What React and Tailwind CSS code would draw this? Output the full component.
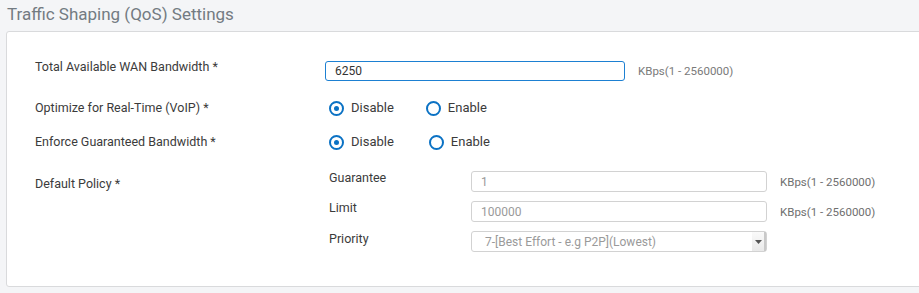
import React, { useState } from "react";

const font = { fontFamily: "Roboto, 'Noto Sans', sans-serif" };

const Radio = ({ checked, label, onClick, className = "" }) => (
  <button
    type="button"
    onClick={onClick}
    className={`flex items-center gap-[7px] text-[13px] text-[#3b3b3b] ${className}`}
  >
    <span className="w-[15px] h-[15px] rounded-full border-2 border-[#0b72c4] flex items-center justify-center bg-white">
      {checked ? <span className="w-[5px] h-[5px] rounded-full bg-[#0b72c4]" /> : null}
    </span>
    {label}
  </button>
);

const App = () => {
  const [voip, setVoip] = useState("disable");
  const [enforce, setEnforce] = useState("disable");

  return (
    <div className="w-[919px] h-[293px] bg-[#f4f5f7] overflow-hidden" style={font}>
      {/* TITLE */}
      <div className="h-[31px] pl-[7px] pt-[3px] text-[17px] leading-[23px] text-[#737b82]">
        Traffic Shaping (QoS) Settings
      </div>

      <div className="ml-[6px] w-[930px] h-[256px] bg-white border border-[#d9dadc] rounded-[3px] pt-[27px] pl-[28px]">
        {/* WAN BANDWIDTH */}
        <div className="flex items-start h-[22px]">
          <div className="w-[290px] text-[12.5px] leading-[16px] text-[#3b3b3b]">
            Total Available WAN Bandwidth *
          </div>
          <input
            defaultValue="6250"
            className="mt-[2px] w-[300px] h-[20px] px-[9px] border border-[#1d80d2] rounded-[3px] text-[12px] text-[#333] outline-none"
          />
          <span className="ml-[13px] mt-[5px] text-[11.5px] leading-[14px] text-[#7a7a7a]">
            KBps(1 - 2560000)
          </span>
        </div>

        {/* VOIP */}
        <div className="flex items-center h-[16px] mt-[19px]">
          <div className="w-[294px] text-[12.5px] text-[#3b3b3b]">
            Optimize for Real-Time (VoIP) *
          </div>
          <Radio checked={voip === "disable"} label="Disable" onClick={() => setVoip("disable")} />
          <Radio checked={voip === "enable"} label="Enable" onClick={() => setVoip("enable")} className="ml-[32px]" />
        </div>

        {/* ENFORCE */}
        <div className="flex items-center h-[16px] mt-[18px]">
          <div className="w-[294px] text-[12.5px] text-[#3b3b3b]">
            Enforce Guaranteed Bandwidth *
          </div>
          <Radio checked={enforce === "disable"} label="Disable" onClick={() => setEnforce("disable")} />
          <Radio checked={enforce === "enable"} label="Enable" onClick={() => setEnforce("enable")} className="ml-[35px]" />
        </div>

        {/* DEFAULT POLICY */}
        <div className="flex items-start mt-[21px]">
          <div className="w-[294px] pt-[5px] text-[12.5px] leading-[16px] text-[#3b3b3b]">
            Default Policy *
          </div>
          <div className="flex flex-col gap-[9px]">
            <div className="flex items-start h-[21px]">
              <div className="w-[142px] text-[12.5px] leading-[14px] text-[#3b3b3b]">Guarantee</div>
              <input
                disabled
                defaultValue="1"
                className="w-[296px] h-[21px] px-[9px] border border-[#d2d2d2] rounded-[3px] bg-white text-[12px] text-[#9a9a9a]"
              />
              <span className="ml-[13px] mt-[4px] text-[11.5px] leading-[14px] text-[#6f6f6f]">
                KBps(1 - 2560000)
              </span>
            </div>
            <div className="flex items-start h-[21px]">
              <div className="w-[142px] text-[12.5px] leading-[14px] text-[#3b3b3b]">Limit</div>
              <input
                disabled
                defaultValue="100000"
                className="w-[296px] h-[21px] px-[9px] border border-[#d2d2d2] rounded-[3px] bg-white text-[12px] text-[#9a9a9a]"
              />
              <span className="ml-[13px] mt-[4px] text-[11.5px] leading-[14px] text-[#6f6f6f]">
                KBps(1 - 2560000)
              </span>
            </div>
            <div className="flex items-start h-[21px]">
              <div className="w-[142px] pt-[1px] text-[12.5px] leading-[14px] text-[#3b3b3b]">Priority</div>
              <div className="w-[296px] h-[21px] flex items-center justify-between border border-[#d2d2d2] rounded-[3px] bg-white">
                <span className="pl-[13px] text-[12px] text-[#9a9a9a]">7-[Best Effort - e.g P2P](Lowest)</span>
                <span className="w-[14px] h-[19px] flex items-center justify-center bg-gradient-to-b from-[#fafafa] to-[#e9e9e9] border-r-2 border-[#c9c9c9]">
                  <svg width="7" height="4" viewBox="0 0 7 4">
                    <path d="M0 0h7L3.5 4z" fill="#555" />
                  </svg>
                </span>
              </div>
            </div>
          </div>
        </div>
      </div>
    </div>
  );
};

export default App;
